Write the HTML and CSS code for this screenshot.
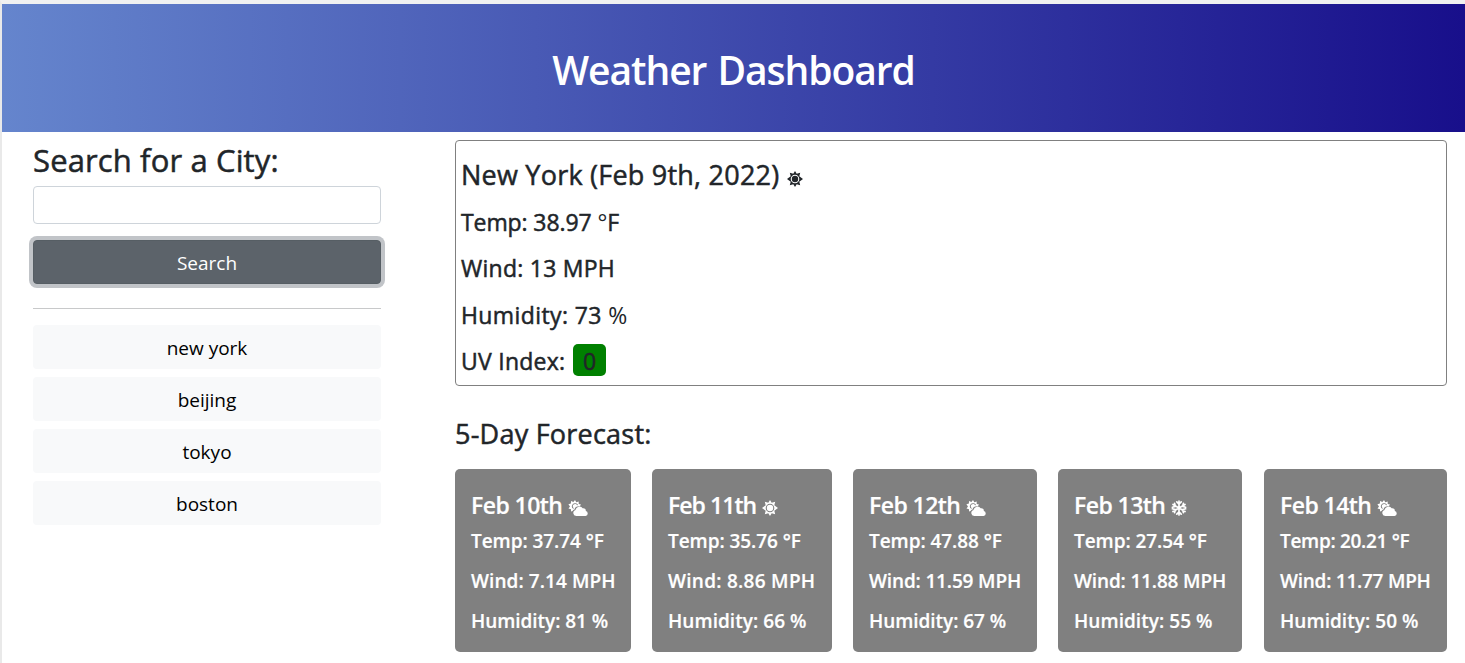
FILE: index.html
```html
<!DOCTYPE html>
<html lang="en">
<head>
<meta charset="utf-8">
<title>Weather Dashboard</title>
<link rel="stylesheet" href="styles.css">
</head>
<body>
<svg class="sprite" aria-hidden="true">
  <symbol id="sun" viewBox="0 0 16 16">
    <path fill="currentColor" fill-rule="evenodd" d="M8 0l1.700 2.800 3.500-1-.9 3.500L16 8l-3.700 2.700.9 3.500-3.500-1L8 16l-1.700-2.800-3.500 1 .9-3.500L0 8l3.700-2.700-.9-3.500 3.500 1zM8 3.700a4.300 4.300 0 1 0 0 8.600 4.300 4.300 0 0 0 0-8.600z"/>
    <circle cx="8" cy="8" r="3.200" fill="currentColor"/>
  </symbol>
  <symbol id="cloud" viewBox="0 0 20 16">
    <path fill="currentColor" fill-rule="evenodd" d="M7 0l1.300 2.200 2.400-.8v2.500l2.300.7-1.200 1.600C9 5.900 7 7 6.500 9.400c-1 .3-1.500.8-1.900 1.600l-1.600.6V9.200L.5 8.500 2 6.400.4 4.300l2.500-.7.1-2.600 2.400.9zM6.900 3.300a3 3 0 0 0-1.700 5.500l.7-.6A2.300 2.300 0 1 1 9.200 5.300l.9-.3a3 3 0 0 0-3.200-1.700z"/>
    <path fill="currentColor" d="M8.200 16a3 3 0 0 1-.7-5.900 4 4 0 0 1 7.200-1.800 2.500 2.500 0 0 1 3.100 2.800A2.500 2.500 0 0 1 17.600 16z"/>
  </symbol>
  <symbol id="snow" viewBox="0 0 16 16">
    <path fill="none" stroke="currentColor" stroke-width="1.700" stroke-linecap="round" d="M8 1v14M2 4.500l12 7M2 11.500l12-7M5.800 1.800L8 4l2.200-2.200M5.800 14.200L8 12l2.200 2.200M1.400 7.200l3-.8-.8-3M14.600 8.800l-3 .8.8 3M1.400 8.800l3 .8-.8 3M14.600 7.200l-3-.8.8-3"/>
  </symbol>
</svg>
<div class="page">
  <header class="header"><h1>Weather Dashboard</h1></header>
  <div class="columns">
    <aside class="sidebar">
      <h2>Search for a City:</h2>
      <input class="field" type="text" aria-label="City">
      <button class="btn search">Search</button>
      <hr>
      <div class="history">
        <button class="btn">new york</button>
        <button class="btn">beijing</button>
        <button class="btn">tokyo</button>
        <button class="btn">boston</button>
      </div>
    </aside>
    <main class="main">
      <section class="current">
        <h3><span>New York (Feb 9th, 2022)</span><svg class="icon"><use href="#sun"/></svg></h3>
        <p class="temp"><span>Temp: 38.97 <i>°</i>F</span></p>
        <p><span>Wind: 13 MPH</span></p>
        <p class="humidity"><span>Humidity: 73 <i>%</i></span></p>
        <p><span>UV Index:</span><b class="uv">0</b></p>
      </section>
      <h3 class="forecast-title">5-Day Forecast:</h3>
      <section class="forecast">
        <article class="card day1"><h4>Feb 10th<svg class="icon wide"><use href="#cloud"/></svg></h4><p>Temp: 37.74 °F</p><p class="wind">Wind: 7.14 MPH</p><p>Humidity: 81 %</p></article>
        <article class="card day2"><h4>Feb 11th<svg class="icon"><use href="#sun"/></svg></h4><p>Temp: 35.76 °F</p><p class="wind">Wind: 8.86 MPH</p><p>Humidity: 66 %</p></article>
        <article class="card day3"><h4>Feb 12th<svg class="icon wide"><use href="#cloud"/></svg></h4><p>Temp: 47.88 °F</p><p class="wind">Wind: 11.59 MPH</p><p>Humidity: 67 %</p></article>
        <article class="card day4"><h4>Feb 13th<svg class="icon"><use href="#snow"/></svg></h4><p>Temp: 27.54 °F</p><p class="wind">Wind: 11.88 MPH</p><p>Humidity: 55 %</p></article>
        <article class="card day5"><h4>Feb 14th<svg class="icon wide"><use href="#cloud"/></svg></h4><p>Temp: 20.21 °F</p><p class="wind">Wind: 11.77 MPH</p><p>Humidity: 50 %</p></article>
      </section>
    </main>
  </div>
</div>
</body>
</html>
```
FILE: styles.css
```css
* { box-sizing: border-box; }
body { margin: 0; background: #fff; color: #212529; font-family: "Open Sans", "Noto Sans", sans-serif; }
h1, h2, h3, h4, p { margin: 0; font-weight: 500; white-space: nowrap; }
h2, h3, .current p { -webkit-text-stroke: .5px currentColor; }
i { font-style: normal; -webkit-text-stroke: 0; }
.sprite { display: none; }
.page { height: 663px; border-top: 4px solid #f0f1f1; border-left: 2px solid #e9e9e9; overflow: hidden; }
.header { height: 128px; display: flex; align-items: center; justify-content: center; background: linear-gradient(to right, #6585cd, #180f8b); color: #fff; }
.header h1 { font-size: 39px; line-height: 48px; font-weight: 600; padding-top: 4px; letter-spacing: -1.050px; word-spacing: 2px; }
.columns { display: flex; }
.sidebar { width: 348px; margin-left: 31px; padding-top: 9px; }
.sidebar h2 { font-size: 31px; line-height: 38px; letter-spacing: .13px; }
.field { display: block; width: 100%; height: 38px; margin: 7px 0 16px; border: 1px solid #ced4da; border-radius: 4px; background: #fff; }
.btn { display: block; width: 100%; height: 44px; padding: 2px 0 0; border: 0; border-radius: 4px; background: #f8f9fa; color: #000; font: 400 19px/28px "Open Sans", "Noto Sans", sans-serif; }
.search { background: #5c636a; border: 1px solid #565e64; color: #fff; box-shadow: 0 0 0 4px #c1c4c8; }
hr { height: 1px; margin: 24px 0 16px; border: 0; background: #c8c9ca; }
.history { display: grid; gap: 8px; }
.main { width: 992px; margin-left: 74px; padding-top: 8px; }
.current { height: 246px; border: 1px solid gray; border-radius: 4px; padding: 17px 5px 0; }
h3 { font-size: 27px; line-height: 34px; letter-spacing: .23px; display: flex; align-items: center; }
.current p { height: 29px; font-size: 23px; line-height: 29px; letter-spacing: .25px; margin-top: 17.300px; display: flex; align-items: center; }
.current .temp { margin-top: 16px; letter-spacing: -.1px; }
.current .humidity { letter-spacing: .4px; }
.uv { flex: none; height: 32px; width: 33px; margin: -3px 0 0 8px; border-radius: 5px; background: green; text-align: center; line-height: 34px; font-weight: 400; }
.icon { width: 16px; height: 16px; margin-left: 8px; margin-top: 7px; flex: none; }
.forecast-title { margin-top: 31px; }
.forecast { display: flex; gap: 21px; margin-top: 18px; }
.card { height: 183px; border-radius: 5px; padding: 21px 16px 0; background: gray; color: #fff; }
.card h4 { font-size: 23px; line-height: 30px; font-weight: 600; letter-spacing: -.55px; display: flex; align-items: center; }
.card p { font-size: 19px; line-height: 24px; font-weight: 600; letter-spacing: -.05px; margin-bottom: 16px; }
.card h4, .card p { -webkit-text-stroke: .2px currentColor; }
.card h4 + p { margin-top: 9px; }
.card .icon { margin-left: 6px; margin-top: 6px; }
.card .icon.wide { width: 20px; }
.day1 { width: 176px; }
.day2 { width: 180px; }
.day3, .day4 { width: 184px; }
.day5 { width: 183px; margin-left: 1px; }
.day2 h4 { letter-spacing: -.95px; }
.day2 p:last-child, .day4 p:last-child, .day5 p:last-child { letter-spacing: .05px; }
.day1 .wind { letter-spacing: .08px; }
.day2 .wind { letter-spacing: .28px; }
.day3 .wind, .day4 .wind { letter-spacing: -.15px; }
.day5 .wind { letter-spacing: -.25px; }
.day5 h4 + p { letter-spacing: -.3px; }
```
